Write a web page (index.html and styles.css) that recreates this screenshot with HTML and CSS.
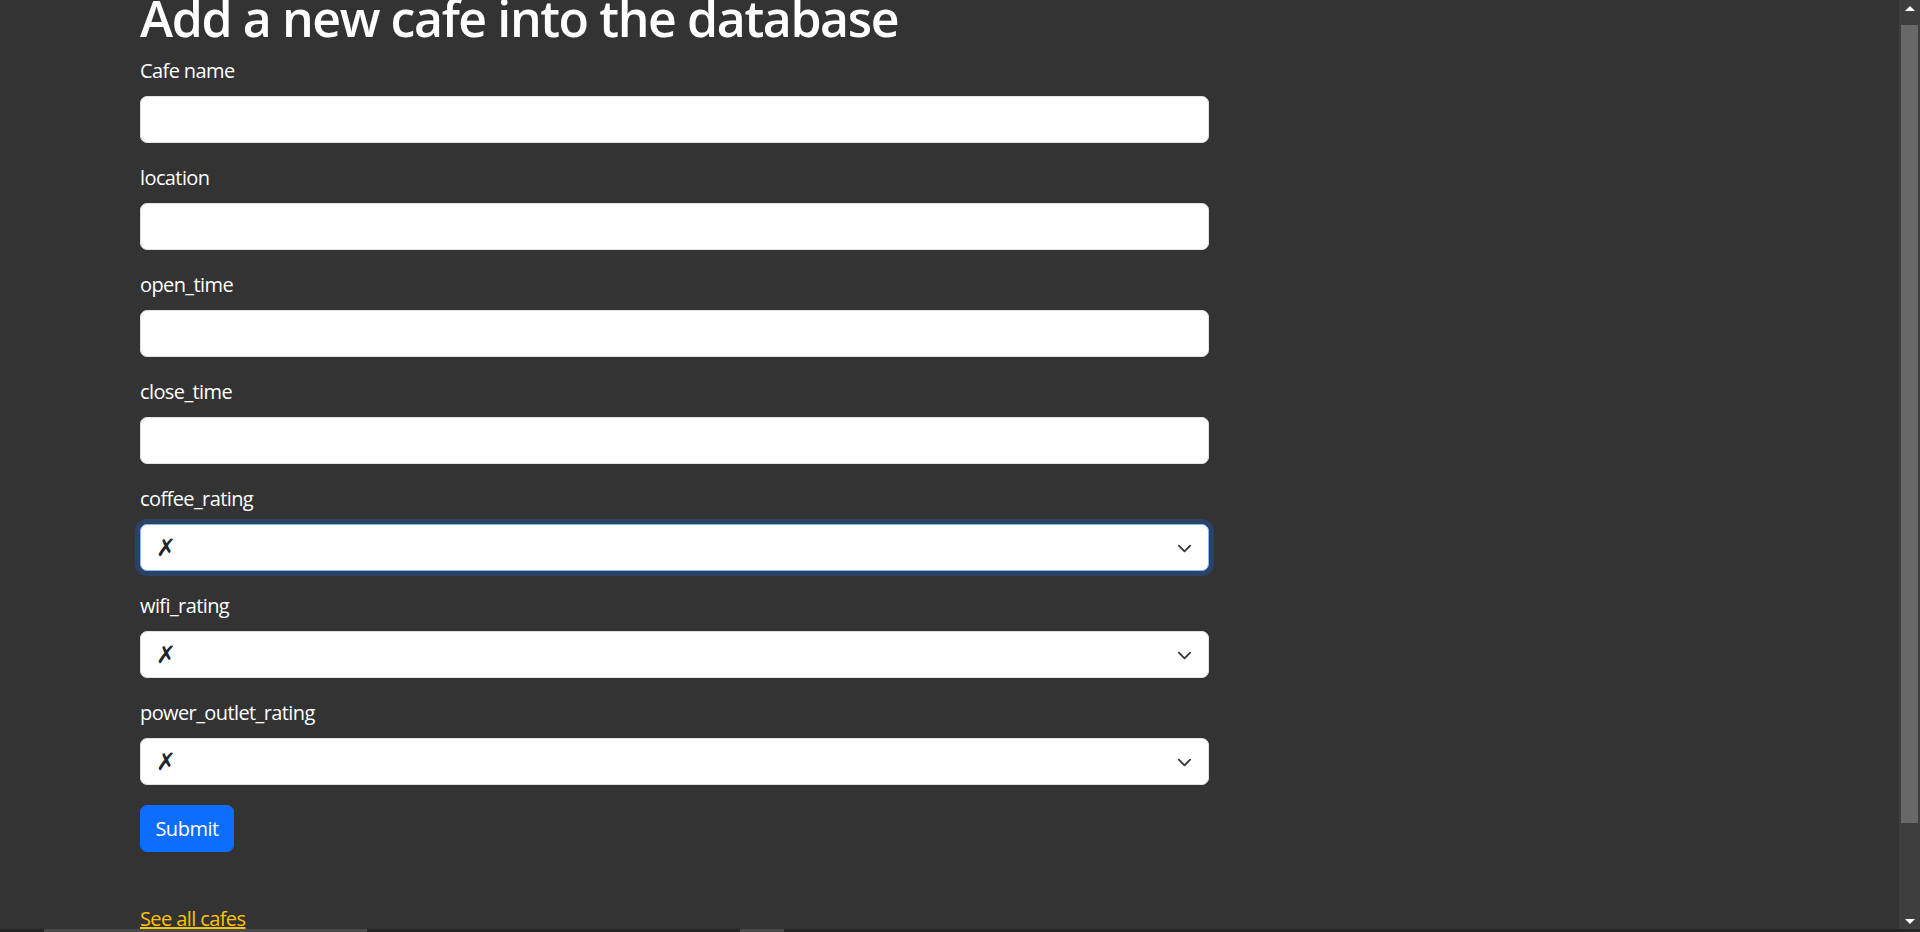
FILE: index.html
```html
<!DOCTYPE html>
<html lang="en">
<head>
<meta charset="utf-8">
<title>Add Cafe</title>
<link rel="stylesheet" href="styles.css">
</head>
<body>
<main class="container">
  <h1 class="title">Add a new cafe into the database</h1>
  <form class="cafe-form">
    <div class="field">
      <label class="field-label">Cafe name</label>
      <input class="field-input" type="text">
    </div>
    <div class="field">
      <label class="field-label">location</label>
      <input class="field-input" type="text">
    </div>
    <div class="field">
      <label class="field-label">open_time</label>
      <input class="field-input" type="text">
    </div>
    <div class="field">
      <label class="field-label">close_time</label>
      <input class="field-input" type="text">
    </div>
    <div class="field">
      <label class="field-label">coffee_rating</label>
      <div class="select-wrap">
        <select class="field-select is-focused"><option>✗</option></select>
        <svg class="select-arrow" viewBox="0 0 16 16"><path fill="none" stroke="#343a40" stroke-linecap="round" stroke-linejoin="round" stroke-width="2" d="m2 5 6 6 6-6"/></svg>
      </div>
    </div>
    <div class="field">
      <label class="field-label">wifi_rating</label>
      <div class="select-wrap">
        <select class="field-select"><option>✗</option></select>
        <svg class="select-arrow" viewBox="0 0 16 16"><path fill="none" stroke="#343a40" stroke-linecap="round" stroke-linejoin="round" stroke-width="2" d="m2 5 6 6 6-6"/></svg>
      </div>
    </div>
    <div class="field">
      <label class="field-label">power_outlet_rating</label>
      <div class="select-wrap">
        <select class="field-select"><option>✗</option></select>
        <svg class="select-arrow" viewBox="0 0 16 16"><path fill="none" stroke="#343a40" stroke-linecap="round" stroke-linejoin="round" stroke-width="2" d="m2 5 6 6 6-6"/></svg>
      </div>
    </div>
    <button class="submit-btn" type="button">Submit</button>
  </form>
  <p class="back"><a class="back-link" href="#">See all cafes</a></p>
</main>

<div class="vscroll">
  <div class="vscroll-btn"><span class="tri-up"></span></div>
  <div class="vscroll-track"><div class="vscroll-thumb"></div></div>
  <div class="vscroll-btn"><span class="tri-down"></span></div>
</div>
<div class="hscroll">
  <div class="hscroll-gap-a"></div>
  <div class="hscroll-seg-a"></div>
  <div class="hscroll-gap-b"></div>
  <div class="hscroll-seg-b"></div>
</div>
</body>
</html>
```
FILE: styles.css
```css
html, body {
  margin: 0;
  padding: 0;
  height: 100%;
  overflow: hidden;
}

body {
  background: #333333;
  color: #ffffff;
  font-family: "Open Sans", "Noto Sans", sans-serif;
  font-size: 20px;
  line-height: 30px;
}

.container {
  padding: 0 140px;
  margin-top: -12px;
}

.title {
  margin: 0 0 8px;
  font-size: 50px;
  line-height: 60px;
  font-weight: 600;
  letter-spacing: -1.4px;
}

.cafe-form {
  width: 1069px;
}

.field {
  margin-bottom: 20px;
}

.field-label {
  display: block;
  margin-bottom: 10px;
  letter-spacing: -0.6px;
}

.field-input,
.field-select {
  display: block;
  box-sizing: border-box;
  width: 100%;
  height: 47px;
  margin: 0;
  padding: 7px 15px;
  background: #ffffff;
  border: 1px solid #dee2e6;
  border-radius: 7px;
  font-family: "DejaVu Sans", "Open Sans", sans-serif;
  font-size: 20px;
  line-height: 30px;
  color: #212529;
  outline: none;
}

.field-select {
  appearance: none;
  -webkit-appearance: none;
  padding-right: 45px;
  font-size: 24px;
}

.field-select.is-focused {
  border-color: #86b7fe;
  box-shadow: 0 0 0 5px rgba(13, 110, 253, 0.25);
}

.select-wrap {
  position: relative;
}

.select-arrow {
  position: absolute;
  right: 17px;
  top: 50%;
  width: 15px;
  height: 15px;
  margin-top: -7px;
  pointer-events: none;
}

.submit-btn {
  display: block;
  box-sizing: border-box;
  height: 47px;
  width: 94px;
  padding: 7px 0;
  margin: 0;
  background: #0d6efd;
  border: 1px solid #0d6efd;
  border-radius: 7px;
  color: #ffffff;
  font-family: "Open Sans", "Noto Sans", sans-serif;
  font-size: 20px;
  line-height: 30px;
  letter-spacing: -0.5px;
}

.back {
  margin: 52px 0 0;
}

.back-link {
  color: #ffc107;
  text-decoration: underline;
  letter-spacing: -0.6px;
}

/* fake window scrollbars */
.vscroll {
  position: fixed;
  top: 0;
  right: 0;
  bottom: 3px;
  width: 21px;
  background: #3e3e3e;
  display: flex;
  flex-direction: column;
}

.vscroll-btn {
  height: 25px;
  display: flex;
  align-items: center;
  justify-content: center;
  background: #3e3e3e;
}

.tri-up {
  width: 0;
  height: 0;
  border-left: 5px solid transparent;
  border-right: 5px solid transparent;
  border-bottom: 5px solid #ffffff;
  margin-top: -8px;
}

.tri-down {
  width: 0;
  height: 0;
  border-left: 5px solid transparent;
  border-right: 5px solid transparent;
  border-top: 5px solid #ffffff;
  margin-top: 10px;
}

.vscroll-track {
  flex: 1;
  padding: 0 2px 0 2px;
  display: flex;
  flex-direction: column;
}

.vscroll-thumb {
  height: 798px;
  background: #686868;
}

.hscroll {
  position: fixed;
  left: 0;
  right: 0;
  bottom: 0;
  height: 3px;
  background: #262626;
  display: flex;
}

.hscroll-gap-a { width: 44px; }
.hscroll-seg-a { width: 323px; background: #4a4a4a; }
.hscroll-gap-b { width: 373px; }
.hscroll-seg-b { width: 44px; background: #4a4a4a; }
```
